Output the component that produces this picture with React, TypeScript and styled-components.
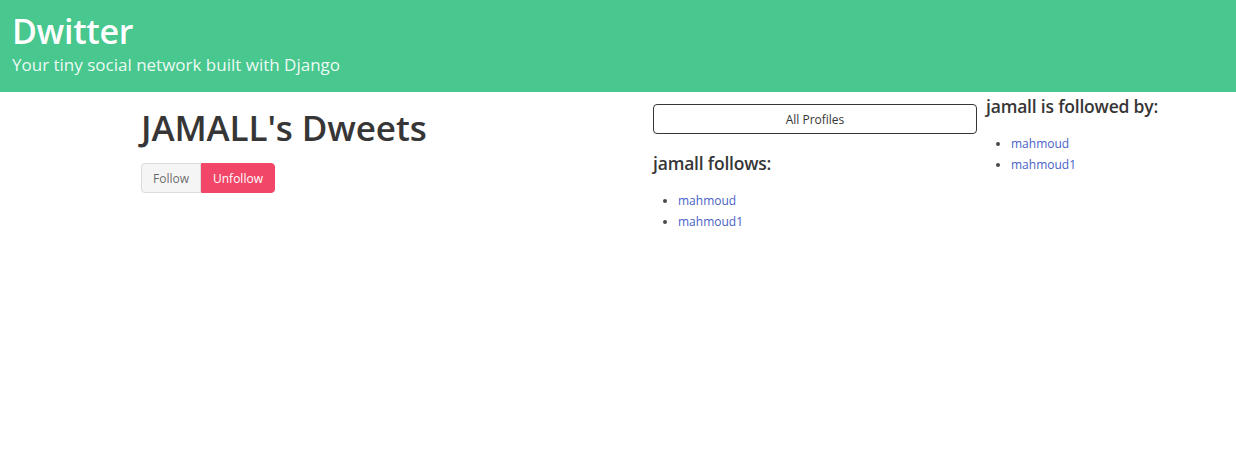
import React from 'react';
import styled, { createGlobalStyle } from 'styled-components';

const GlobalStyle = createGlobalStyle`
  html, body {
    margin: 0;
    padding: 0;
    background: #fff;
    font-family: "Open Sans", "Noto Sans", sans-serif;
    color: #363636;
  }
`;

const Hero = styled.section`
  background: #48c78e;
  color: #fff;
  height: 92px;
  box-sizing: border-box;
  padding: 8px 12px 0;
`;

const HeroTitle = styled.h1`
  margin: 0;
  font-size: 34px;
  font-weight: 600;
  line-height: 46px;
  letter-spacing: -0.3px;
`;

const HeroSubtitle = styled.p`
  margin: 0;
  font-size: 17px;
  line-height: 22px;
  color: rgba(255, 255, 255, 0.92);
`;

const Columns = styled.main`
  display: grid;
  grid-template-columns: 641px 336px 1fr;
`;

const Column = styled.div<{ $pad: number; $top: number }>`
  padding-left: ${({ $pad }) => $pad}px;
  padding-top: ${({ $top }) => $top}px;
`;

const PageTitle = styled.h2`
  margin: 0;
  font-size: 35px;
  font-weight: 600;
  line-height: 48px;
  letter-spacing: -0.1px;
`;

const ButtonGroup = styled.div`
  display: flex;
  margin-top: 11px;
`;

const Button = styled.button<{ $variant: 'light' | 'danger' }>`
  height: 30px;
  box-sizing: border-box;
  padding: 0 11px;
  font-family: inherit;
  font-size: 12px;
  cursor: pointer;
  border: 1px solid ${({ $variant }) => ($variant === 'danger' ? '#f14668' : '#dbdbdb')};
  background: ${({ $variant }) => ($variant === 'danger' ? '#f14668' : '#f5f5f5')};
  color: ${({ $variant }) => ($variant === 'danger' ? '#fff' : 'rgba(0,0,0,0.6)')};
  border-radius: ${({ $variant }) => ($variant === 'danger' ? '0 4px 4px 0' : '4px 0 0 4px')};
`;

const OutlineButton = styled.button`
  display: block;
  width: 324px;
  height: 30px;
  box-sizing: border-box;
  border: 1px solid #363636;
  border-radius: 4px;
  background: #fff;
  color: #363636;
  font-family: inherit;
  font-size: 12px;
  cursor: pointer;
`;

const SectionTitle = styled.h3<{ $top: number }>`
  margin: ${({ $top }) => $top}px 0 0;
  font-size: 17.5px;
  font-weight: 600;
  line-height: 24px;
  letter-spacing: -0.2px;
`;

const List = styled.ul<{ $top: number }>`
  margin: ${({ $top }) => $top}px 0 0;
  padding-left: 25px;
  font-size: 12px;
  line-height: 21px;
  color: #4a4a4a;
`;

const Link = styled.a`
  color: #485fc7;
  text-decoration: none;
`;

const names = ['mahmoud', 'mahmoud1'];

export default function App() {
  return (
    <>
      <GlobalStyle />
      <Hero>
        <HeroTitle>Dwitter</HeroTitle>
        <HeroSubtitle>Your tiny social network built with Django</HeroSubtitle>
      </Hero>
      <Columns>
        <Column $pad={141} $top={12}>
          <PageTitle>JAMALL's Dweets</PageTitle>
          <ButtonGroup>
            <Button $variant="light">Follow</Button>
            <Button $variant="danger">Unfollow</Button>
          </ButtonGroup>
        </Column>
        <Column $pad={12} $top={12}>
          <OutlineButton>All Profiles</OutlineButton>
          <SectionTitle $top={17}>jamall follows:</SectionTitle>
          <List $top={15}>
            {names.map((n) => (
              <li key={n}>
                <Link href="#">{n}</Link>
              </li>
            ))}
          </List>
        </Column>
        <Column $pad={9} $top={2}>
          <SectionTitle $top={0}>jamall is followed by:</SectionTitle>
          <List $top={15}>
            {names.map((n) => (
              <li key={n}>
                <Link href="#">{n}</Link>
              </li>
            ))}
          </List>
        </Column>
      </Columns>
    </>
  );
}
